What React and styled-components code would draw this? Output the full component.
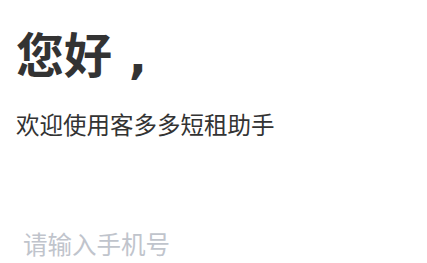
import React from "react";
import styled, { createGlobalStyle } from "styled-components";

const Global = createGlobalStyle`
  html, body { margin: 0; padding: 0; background: #ffffff; }
  body { font-family: "DejaVu Sans", "Noto Sans CJK SC", sans-serif; }
`;

const Page = styled.div`
  display: flex;
  flex-direction: column;
  padding: 20px 16px 0 16px;
  width: 427px;
  height: 263px;
  box-sizing: border-box;
  overflow: hidden;
`;

const Title = styled.h1`
  margin: 0;
  font-family: "DejaVu Sans", "Noto Sans CJK SC", sans-serif;
  font-size: 48px;
  line-height: 72px;
  font-weight: 700;
  color: #333333;
  white-space: pre;
`;

const Subtitle = styled.p`
  margin: 16px 0 0 0;
  font-family: "Noto Sans CJK SC", sans-serif;
  font-size: 23.5px;
  line-height: 32px;
  color: #333333;
`;

const Field = styled.div`
  display: flex;
  align-items: center;
  margin-top: 83px;
  height: 40px;
`;

const Input = styled.input`
  flex: 1;
  border: none;
  outline: none;
  background: transparent;
  padding: 0 0 0 7px;
  font-family: "Noto Sans CJK SC", sans-serif;
  font-size: 24.5px;
  color: #333333;
  &::placeholder { color: #c0c4cc; }
`;

export default function App() {
  return (
    <>
      <Global />
      <Page>
        <Title>您好 ,</Title>
        <Subtitle>欢迎使用客多多短租助手</Subtitle>
        <Field>
          <Input type="tel" placeholder="请输入手机号" />
        </Field>
      </Page>
    </>
  );
}
